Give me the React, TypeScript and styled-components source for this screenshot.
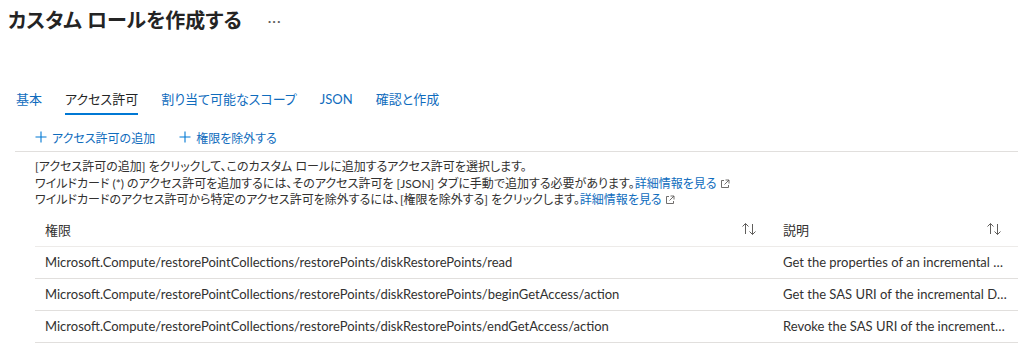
import styled, { createGlobalStyle } from "styled-components";

const GlobalStyle = createGlobalStyle`
  body {
    margin: 0;
    background: #ffffff;
    font-family: "Lato", "Noto Sans CJK JP", sans-serif;
    font-feature-settings: "palt";
    color: #323130;
  }
`;

interface IPermission {
  name: string;
  desc: string;
}

const permissions: IPermission[] = [
  {
    name: "Microsoft.Compute/restorePointCollections/restorePoints/diskRestorePoints/read",
    desc: "Get the properties of an incremental DiskRestorePoint",
  },
  {
    name: "Microsoft.Compute/restorePointCollections/restorePoints/diskRestorePoints/beginGetAccess/action",
    desc: "Get the SAS URI of the incremental DiskRestorePoint",
  },
  {
    name: "Microsoft.Compute/restorePointCollections/restorePoints/diskRestorePoints/endGetAccess/action",
    desc: "Revoke the SAS URI of the incremental DiskRestorePoint",
  },
];

const tabs = ["基本", "アクセス許可", "割り当て可能なスコープ", "JSON", "確認と作成"];

const SortIcon = () => (
  <svg width="16" height="14" viewBox="0 0 16 14" fill="none" stroke="#605e5c" strokeWidth="1">
    <path d="M4.5 12V1.5M1.5 4.5l3-3 3 3" />
    <path d="M11.5 2v10.5M8.5 9.5l3 3 3-3" />
  </svg>
);

const ExternalIcon = () => (
  <svg width="10" height="10" viewBox="0 0 10 10" fill="none" stroke="#605e5c" strokeWidth="0.9">
    <path d="M4 1.5H1.5v7h7V6" />
    <path d="M5.5 1h3.5v3.5M9 1L4.5 5.5" />
  </svg>
);

const PlusIcon = () => (
  <svg width="12" height="12" viewBox="0 0 12 12" stroke="#0078d4" strokeWidth="1.1">
    <path d="M6 0.5v11M0.5 6h11" />
  </svg>
);

export default function App() {
  return (
    <>
      <GlobalStyle />
      <Page>
        <TitleRow>
          <Title>カスタム ロールを作成する</Title>
          <More>···</More>
        </TitleRow>

        <TabBar>
          {tabs.map((tab, index) => (
            <Tab key={tab} $active={index === 1}>
              {tab}
            </Tab>
          ))}
        </TabBar>

        <Toolbar>
          <ToolButton>
            <PlusIcon />
            アクセス許可の追加
          </ToolButton>
          <ToolButton>
            <PlusIcon />
            権限を除外する
          </ToolButton>
        </Toolbar>

        <Divider />

        <Info>
          <p>[アクセス許可の追加] をクリックして、このカスタム ロールに追加するアクセス許可を選択します。</p>
          <p>
            ワイルドカード (*) のアクセス許可を追加するには、そのアクセス許可を [JSON] タブに手動で追加する必要があります。
            <LearnMore>
              詳細情報を見る
              <ExternalIcon />
            </LearnMore>
          </p>
          <p>
            ワイルドカードのアクセス許可から特定のアクセス許可を除外するには、[権限を除外する] をクリックします。
            <LearnMore>
              詳細情報を見る
              <ExternalIcon />
            </LearnMore>
          </p>
        </Info>

        <Table>
          <HeaderRow>
            <HeaderCell>
              権限
              <SortIcon />
            </HeaderCell>
            <HeaderCell>
              説明
              <SortIcon />
            </HeaderCell>
          </HeaderRow>
          {permissions.map((item) => (
            <Row key={item.name}>
              <Cell>{item.name}</Cell>
              <Cell>{item.desc}</Cell>
            </Row>
          ))}
        </Table>
      </Page>
    </>
  );
}

const Page = styled.div`
  width: 1018px;
  height: 349px;
  overflow: hidden;
`;

const TitleRow = styled.div`
  display: flex;
  align-items: center;
  gap: 26px;
  padding: 6px 0 0 8px;
  height: 28px;
`;

const Title = styled.h1`
  margin: 0;
  font-size: 20px;
  font-weight: 600;
  line-height: 28px;
  color: #242424;
`;

const More = styled.span`
  font-size: 14px;
  color: #605e5c;
  letter-spacing: 1px;
`;

const TabBar = styled.div`
  display: flex;
  gap: 23px;
  margin-top: 51px;
  padding-left: 16px;
  height: 30px;
`;

const Tab = styled.div<{ $active?: boolean }>`
  font-size: 13px;
  line-height: 28px;
  height: 30px;
  box-sizing: border-box;
  color: ${(p) => (p.$active ? "#242424" : "#0f6cbd")};
  border-bottom: 2px solid ${(p) => (p.$active ? "#0078d4" : "transparent")};
`;

const Toolbar = styled.div`
  display: flex;
  gap: 24px;
  padding: 8px 0 0 35px;
  height: 28px;
  align-items: center;
`;

const ToolButton = styled.div`
  display: flex;
  align-items: center;
  gap: 5px;
  font-size: 12px;
  color: #0f6cbd;
`;

const Divider = styled.div`
  margin-left: 15px;
  height: 1px;
  background: #e1dfdd;
`;

const Info = styled.div`
  padding: 7px 0 0 35px;
  height: 53px;
  font-size: 12px;
  line-height: 16.5px;

  p {
    margin: 0;
    white-space: nowrap;
  }
`;

const LearnMore = styled.span`
  color: #0f6cbd;
  display: inline-flex;
  align-items: center;
  gap: 3px;
`;

const Table = styled.div`
  margin-left: 35px;
  display: grid;
  grid-template-columns: 738px 1fr;
`;

const HeaderRow = styled.div`
  display: contents;
`;

const HeaderCell = styled.div`
  height: 34px;
  display: flex;
  align-items: center;
  justify-content: space-between;
  padding: 0 16px 0 10px;
  font-size: 13px;
  border-bottom: 1px solid #edebe9;
`;

const Row = styled.div`
  display: contents;
`;

const Cell = styled.div`
  height: 31px;
  line-height: 31px;
  padding: 0 10px;
  font-size: 13px;
  border-bottom: 1px solid #e1dfdd;
  white-space: nowrap;
  overflow: hidden;
  text-overflow: ellipsis;
`;
